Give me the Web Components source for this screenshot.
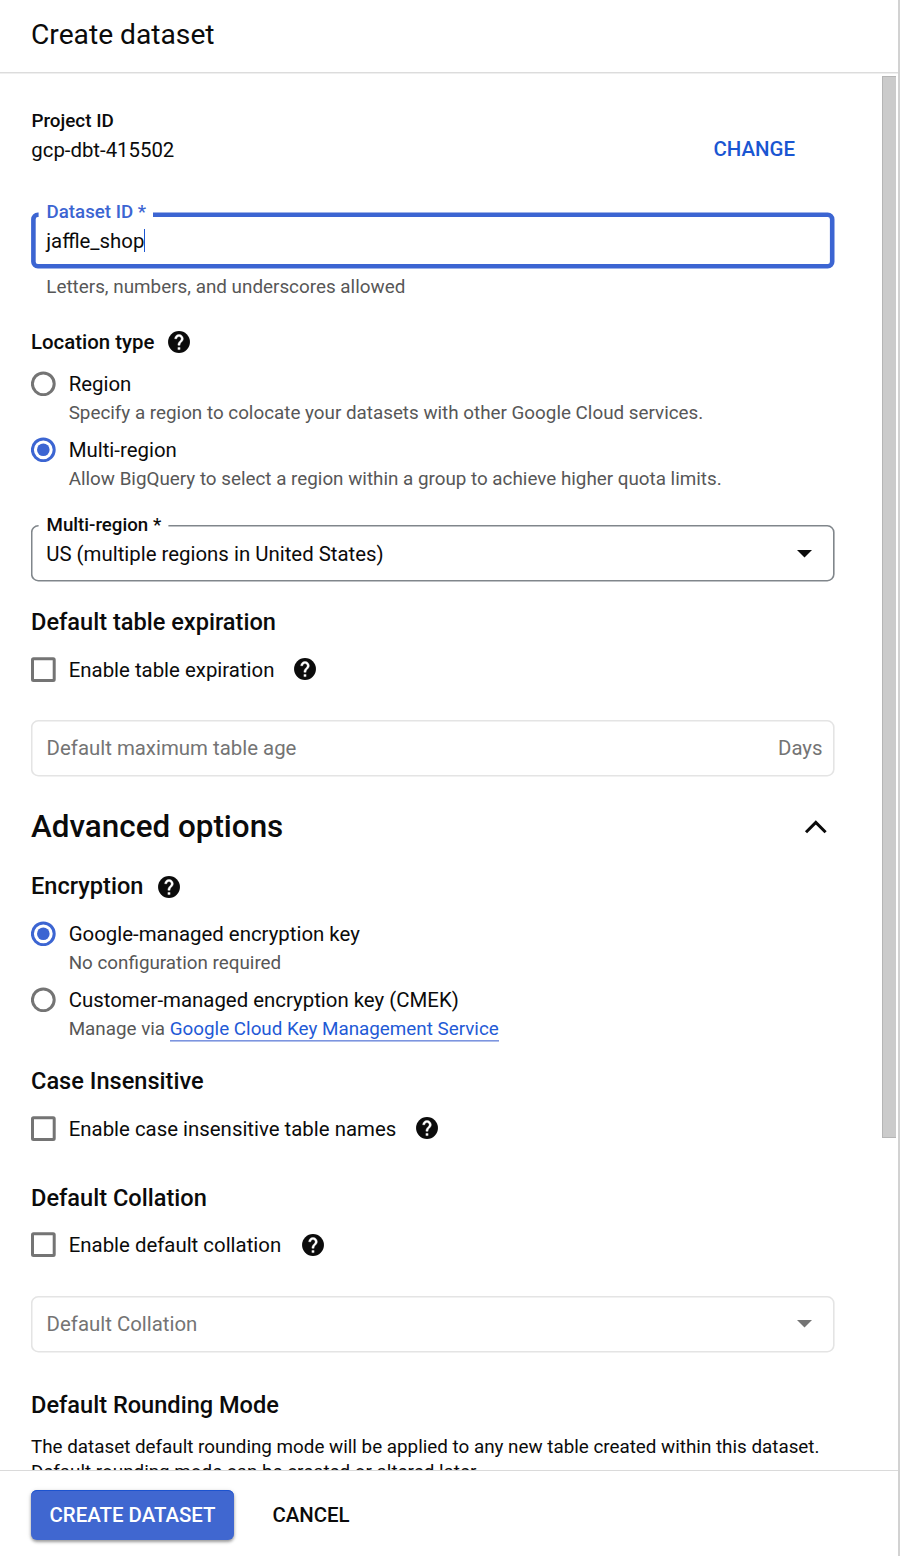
<!DOCTYPE html>
<html lang="en">
<head>
<meta charset="utf-8">
<title>Create dataset</title>
<style>
html,body{margin:0;height:100%;background:#fff}
body{font-family:Roboto,"Liberation Sans",sans-serif;color:#0b0b0b;overflow:hidden}
</style>
</head>
<body>
<dataset-panel>
  <span slot="title">Create dataset</span>
  <project-row value="gcp-dbt-415502" action="CHANGE">Project ID</project-row>
  <outlined-field focused label="Dataset ID *" notch="122" style="margin-top:48px">jaffle_shop</outlined-field>
  <field-hint>Letters, numbers, and underscores allowed</field-hint>

  <section-heading size="small" style="margin-top:29px">Location type<help-icon slot="help" style="margin-left:11.5px"></help-icon></section-heading>
  <choice-item type="radio" style="margin-top:14px">Region<span slot="note">Specify a region to colocate your datasets with other Google Cloud services.</span></choice-item>
  <choice-item type="radio" checked style="margin-top:10px">Multi-region<span slot="note">Allow BigQuery to select a region within a group to achieve higher quota limits.</span></choice-item>
  <outlined-field label="Multi-region *" notch="137.4" arrow style="margin-top:33px">US (multiple regions in United States)</outlined-field>

  <section-heading style="margin-top:26px">Default table expiration</section-heading>
  <choice-item type="checkbox" style="margin-top:20px">Enable table expiration<help-icon slot="help" style="margin-left:18px;margin-top:-2px"></help-icon></choice-item>
  <outlined-field disabled suffix="Days" style="margin-top:36px">Default maximum table age</outlined-field>

  <section-heading size="large" style="margin-top:30px">Advanced options<chevron-up slot="end"></chevron-up></section-heading>
  <section-heading style="margin-top:26px">Encryption<help-icon slot="help" style="margin-left:12.4px;margin-top:2px"></help-icon></section-heading>
  <choice-item type="radio" checked style="margin-top:20px">Google-managed encryption key<span slot="note">No configuration required</span></choice-item>
  <choice-item type="radio" style="margin-top:10px">Customer-managed encryption key (CMEK)<span slot="note">Manage via <text-link>Google Cloud Key Management Service</text-link></span></choice-item>

  <section-heading style="margin-top:25px">Case Insensitive</section-heading>
  <choice-item type="checkbox" style="margin-top:20px">Enable case insensitive table names<help-icon slot="help" style="margin-left:18px;margin-top:-2px"></help-icon></choice-item>

  <section-heading style="margin-top:41px">Default Collation</section-heading>
  <choice-item type="checkbox" style="margin-top:19px">Enable default collation<help-icon slot="help" style="margin-left:18.8px;margin-top:-1px"></help-icon></choice-item>
  <outlined-field disabled arrow style="margin-top:37px">Default Collation</outlined-field>

  <section-heading style="margin-top:38px">Default Rounding Mode</section-heading>
  <body-copy>The dataset default rounding mode will be applied to any new table created within this dataset.<br>Default rounding mode can be created or altered later.</body-copy>

  <action-button slot="actions" primary>CREATE DATASET</action-button>
  <action-button slot="actions">CANCEL</action-button>
</dataset-panel>

<script>
const define = (name, render) => customElements.define(name, class extends HTMLElement {
  connectedCallback() {
    if (this.shadowRoot) return;
    this.attachShadow({ mode: 'open' }).innerHTML = render(this);
  }
});

define('dataset-panel', () => `
<style>
:host{display:grid;grid-template-rows:74px 1396px 86px;width:900px;height:1556px;box-sizing:border-box;border-right:2px solid #d2d2d2;background:#fff}
header{box-sizing:border-box;height:74px;padding:0 31px;display:flex;align-items:center;font-size:28.2px;line-height:34px;padding-bottom:5px;background:linear-gradient(#dcdcdc 0 1px,#efefef 1px) bottom/100% 2px no-repeat}
.scroll{display:grid;grid-template-columns:1fr 14px;padding-right:2px;overflow:hidden}
.content{padding:35px 0 0 31px;width:804px;height:1361px}
.bar{height:1062px;margin-top:2px;box-sizing:border-box;background:#cbcbcb;border:1px solid #b5b5b5;border-right:0}
footer{box-sizing:border-box;border-top:1px solid #dadada;display:flex;align-items:flex-start;padding:19px 0 0 31px}
</style>
<header><slot name="title"></slot></header>
<div class="scroll"><div class="content"><slot></slot></div><div class="bar"></div></div>
<footer><slot name="actions"></slot></footer>`);

define('project-row', el => `
<style>
:host{display:grid;grid-template-columns:1fr auto;grid-template-rows:27px 28px}
b{grid-column:1/3;font-size:18.85px;font-weight:500;line-height:25px;padding-left:.4px}
span{font-size:20.37px;line-height:28px;padding-left:.3px}
a{font-size:20.45px;font-weight:500;line-height:27px;color:#1a56d2;margin-right:40px}
</style>
<b><slot></slot></b><span>${el.getAttribute('value')}</span><a>${el.getAttribute('action')}</a>`);

define('outlined-field', el => {
  const focused = el.hasAttribute('focused'), disabled = el.hasAttribute('disabled');
  const w = focused ? 4.6 : 1.6, color = focused ? '#3c65d2' : disabled ? '#e4e4e4' : '#80868b';
  const l = focused ? 2.4 : 0.7, r = focused ? 801.2 : 802.8, t = focused ? 2.7 : 0.8, b = focused ? 54.3 : 55.7;
  const q = focused ? 4.5 : 6.5, n = el.getAttribute('notch'), s = n || 7.6;
  const d = `M${s} ${t}H${r-q}A${q} ${q} 0 0 1 ${r} ${t+q}V${b-q}A${q} ${q} 0 0 1 ${r-q} ${b}H${l+q}A${q} ${q} 0 0 1 ${l} ${b-q}V${t+q}A${q} ${q} 0 0 1 ${l+q} ${t}${n ? 'H7.6' : 'Z'}`;
  return `
<style>
:host{display:flex;position:relative;height:57px;width:804px;box-sizing:border-box;padding:0 12.5px ${disabled ? 2 : 0}px ${disabled ? 15.6 : 15.2}px;align-items:center;font-size:20.4px;line-height:28px;color:${disabled ? '#747474' : '#0b0b0b'}}
.outline{position:absolute;left:0;top:0}
label{position:absolute;left:15.6px;top:-12px;font-size:18.7px;font-weight:500;line-height:24px;color:${focused ? '#3c65d2' : '#0b0b0b'}}
.caret{width:1px;height:23px;background:#1a56d2}
.suffix,.arrow{margin-left:auto}
.arrow{margin-right:11px}
</style>
<svg class="outline" width="804" height="57" fill="none" stroke="${color}" stroke-width="${w}"><path d="${d}"/></svg>
${n ? `<label>${el.getAttribute('label')}</label>` : ''}
<span><slot></slot></span>${focused ? '<i class="caret"></i>' : ''}
${el.hasAttribute('suffix') ? `<span class="suffix">${el.getAttribute('suffix')}</span>` : ''}
${el.hasAttribute('arrow') ? `<svg class="arrow" width="15" height="8" fill="${disabled ? '#747474' : '#0b0b0b'}"><path d="M0 0H15L7.5 7.6Z"/></svg>` : ''}`;
});

define('field-hint', () => `
<style>:host{display:block;margin-top:6px;padding-left:15.3px;height:24px;font-size:18.85px;line-height:24px;color:#575757}</style><slot></slot>`);

define('section-heading', el => {
  const k = el.getAttribute('size');
  return `
<style>:host{display:flex;align-items:center;font-weight:500;height:${k === 'large' ? 39 : 28}px;line-height:28px;font-size:${k === 'large' ? 31.4 : k === 'small' ? 20.4 : 23.58}px}
.end{margin-left:auto}</style>
<span><slot></slot></span><slot name="help"></slot><span class="end"><slot name="end"></slot></span>`;
});

define('choice-item', el => {
  const on = el.hasAttribute('checked'), radio = el.getAttribute('type') === 'radio';
  return `
<style>
:host{display:grid;grid-template-columns:25px 1fr;column-gap:12.7px;font-size:20.4px;line-height:28px}
.row{display:flex;align-items:center;height:28px}
.mark{margin-top:1px}
.note{grid-column:2;height:27px;padding-top:1px;font-size:18.82px;color:#575757}
</style>
<svg class="mark" width="25" height="25" fill="none" stroke="${on ? '#3c65d2' : '#747474'}" stroke-width="3">
${radio ? '<circle cx="12.3" cy="12.8" r="10.9"/>' : '<rect x="1.5" y="1.8" width="21.7" height="21.7" rx="1"/>'}
${on ? '<circle cx="12.3" cy="12.8" r="6.3" fill="#3c65d2" stroke="none"/>' : ''}</svg>
<div class="row"><span><slot></slot></span><slot name="help"></slot></div>
${radio ? '<div class="note"><slot name="note"></slot></div>' : ''}`;
});

define('help-icon', () => `
<style>:host{display:block;width:26px;height:26px}svg{display:block}</style>
<svg width="26" height="26" viewBox="0 0 24 24"><circle cx="12" cy="12" r="10.1" fill="#0b0b0b"/><path fill="#fff" stroke="#fff" stroke-width=".35" d="M13 19h-2v-2h2v2zm2.07-7.75l-.9.92C13.45 12.9 13 13.5 13 15h-2v-.5c0-1.1.45-2.1 1.17-2.83l1.24-1.26c.37-.36.59-.86.59-1.41 0-1.1-.9-2-2-2s-2 .9-2 2H8c0-2.21 1.79-4 4-4s4 1.79 4 4c0 .88-.36 1.68-.93 2.25z"/></svg>`);

define('chevron-up', () => `
<style>:host{display:block;margin-right:7px;margin-top:1px}svg{display:block}</style>
<svg width="24" height="16" fill="none" stroke="#0b0b0b" stroke-width="3"><path d="M2 13.2L11.8 3.4L21.6 13.2"/></svg>`);

define('text-link', () => `
<style>:host{color:#1f5ad6;box-shadow:0 1.6px #7d95df}</style><slot></slot>`);

define('body-copy', () => `
<style>:host{display:block;margin-top:16px;font-size:18.82px;line-height:25px;white-space:nowrap}</style><slot></slot>`);

define('action-button', el => `
<style>:host{display:flex;align-items:center;justify-content:center;box-sizing:border-box;height:50px;font-size:20.42px;font-weight:500;line-height:28px;
${el.hasAttribute('primary') ? 'width:203px;border-radius:6px;background:#4067d0;color:#fff;box-shadow:inset 0 1px #1c53cf,0 2px 3px rgba(0,0,0,.32),0 1px 5px rgba(0,0,0,.14)' : 'margin-left:38.4px'}}</style><slot></slot>`);
</script>
</body>
</html>
